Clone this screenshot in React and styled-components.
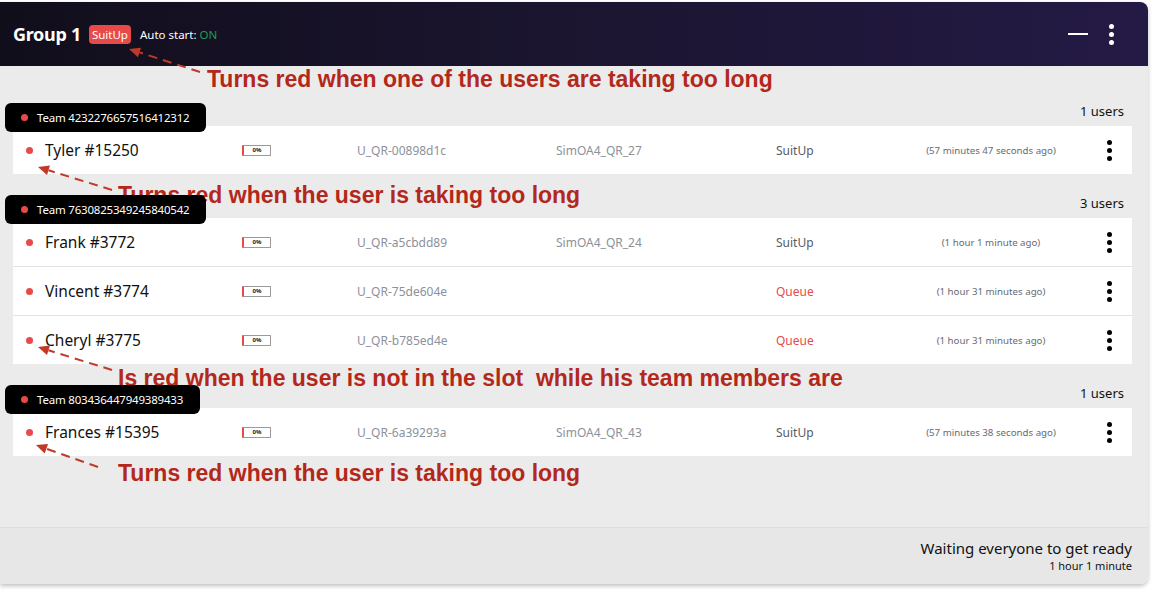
import styled, { createGlobalStyle } from "styled-components";

const GlobalStyle = createGlobalStyle`
  html, body {
    margin: 0;
    padding: 0;
    background: #ffffff;
  }
  body {
    font-family: "Noto Sans", "Open Sans", sans-serif;
  }
`;

const Page = styled.div`
  position: relative;
  width: 1161px;
  height: 593px;
  padding-top: 2px;
  box-sizing: border-box;
`;

const Panel = styled.div`
  width: 1148px;
  border-radius: 0 8px 8px 0;
  overflow: hidden;
  box-shadow: 0 2px 4px rgba(0, 0, 0, 0.25);
`;

const Header = styled.div`
  height: 64px;
  display: flex;
  align-items: center;
  padding: 0 34px 0 13px;
  background: linear-gradient(90deg, #110e1b 0%, #1b1530 50%, #241a45 100%);
  color: #fff;
`;

const Title = styled.div`
  font-size: 18px;
  font-weight: 700;
  letter-spacing: -0.3px;
`;

const StateBadge = styled.span`
  margin-left: 8px;
  background: #e84a4a;
  border-radius: 4px;
  padding: 2px 3px;
  font-size: 11.5px;
  line-height: 15px;
  color: #fff;
`;

const AutoStart = styled.span`
  margin-left: 9px;
  font-size: 11.5px;
  color: #fff;
  b {
    font-weight: 400;
    color: #1f9d50;
  }
`;

const HeaderActions = styled.div`
  margin-left: auto;
  display: flex;
  align-items: center;
  gap: 21px;
`;

const Minus = styled.div`
  width: 20px;
  height: 2px;
  background: #fff;
`;

const Kebab = styled.div`
  display: flex;
  flex-direction: column;
  align-items: center;
  gap: 3px;
  span {
    width: ${(p) => p.$size}px;
    height: ${(p) => p.$size}px;
    border-radius: 50%;
    background: ${(p) => p.$color};
  }
`;

const Body = styled.div`
  background: #ebebeb;
  padding: 37px 16px 71px 5px;
`;

const Section = styled.div`
  & + & {
    margin-top: 21px;
  }
`;

const TeamHeader = styled.div`
  display: flex;
  justify-content: space-between;
  align-items: flex-start;
  position: relative;
  z-index: 1;
`;

const TeamTag = styled.div`
  display: flex;
  align-items: center;
  gap: 9px;
  height: 29px;
  padding: 0 17px 0 16px;
  background: #000;
  border-radius: 6px;
  color: #fff;
  font-size: 11.5px;
  letter-spacing: -0.2px;
`;

const Dot = styled.span`
  width: 7px;
  height: 7px;
  border-radius: 50%;
  background: #e84a4a;
  flex: none;
`;

const UsersCount = styled.div`
  font-size: 13px;
  line-height: 16px;
  color: #111;
  padding-right: 8px;
`;

const Rows = styled.div`
  margin: -6px 0 0 8px;
  background: #fff;
`;

const Row = styled.div`
  display: grid;
  grid-template-columns: 19px 197px 115px 199px 220px 115px 200px 36px;
  align-items: center;
  height: 48px;
  padding-left: 13px;
  & + & {
    border-top: 1px solid #e3e3e3;
  }
`;

const Name = styled.div`
  font-size: 15.5px;
  color: #111;
`;

const Progress = styled.div`
  width: 26px;
  height: 9px;
  border: 1px solid #9a9a9a;
  border-left: 2px solid #e84a4a;
  border-radius: 1px;
  font-size: 6px;
  font-weight: 700;
  line-height: 9px;
  text-align: center;
  color: #222;
`;

const Cell = styled.div`
  font-size: 12px;
  color: ${(p) => p.$color || "#8c919a"};
`;

const TimeAgo = styled.div`
  font-size: 9.7px;
  color: #666b73;
  text-align: center;
`;

const Footer = styled.div`
  height: 57px;
  background: #e7e7e7;
  border-top: 1px solid #dedede;
  box-sizing: border-box;
  display: flex;
  flex-direction: column;
  align-items: flex-end;
  justify-content: center;
  padding-right: 16px;
  color: #111;
`;

const FooterTitle = styled.div`
  font-size: 15px;
  line-height: 20px;
`;

const FooterSub = styled.div`
  font-size: 11px;
  line-height: 16px;
`;

const Annotations = styled.svg`
  position: absolute;
  left: 0;
  top: 0;
  pointer-events: none;
`;

const Note = styled.div`
  position: absolute;
  left: ${(p) => p.$x}px;
  top: ${(p) => p.$y}px;
  font-family: "Liberation Sans", Arial, sans-serif;
  font-weight: 700;
  font-size: 23px;
  line-height: 26px;
  color: #b3281a;
  white-space: pre;
  pointer-events: none;
`;

const teams = [
  {
    id: "4232276657516412312",
    users: [
      { name: "Tyler #15250", qr: "U_QR-00898d1c", sim: "SimOA4_QR_27", status: "SuitUp", ago: "(57 minutes 47 seconds ago)" },
    ],
  },
  {
    id: "7630825349245840542",
    users: [
      { name: "Frank #3772", qr: "U_QR-a5cbdd89", sim: "SimOA4_QR_24", status: "SuitUp", ago: "(1 hour 1 minute ago)" },
      { name: "Vincent #3774", qr: "U_QR-75de604e", sim: "", status: "Queue", ago: "(1 hour 31 minutes ago)" },
      { name: "Cheryl #3775", qr: "U_QR-b785ed4e", sim: "", status: "Queue", ago: "(1 hour 31 minutes ago)" },
    ],
  },
  {
    id: "803436447949389433",
    users: [
      { name: "Frances #15395", qr: "U_QR-6a39293a", sim: "SimOA4_QR_43", status: "SuitUp", ago: "(57 minutes 38 seconds ago)" },
    ],
  },
];

// red notes drawn over the screenshot
const notes = [
  { x: 207, y: 66, text: "Turns red when one of the users are taking too long" },
  { x: 118, y: 182, text: "Turns red when the user is taking too long" },
  { x: 118, y: 365, text: "Is red when the user is not in the slot  while his team members are" },
  { x: 118, y: 460, text: "Turns red when the user is taking too long" },
];

const arrows = [
  [200, 72, 129, 49],
  [112, 190, 38, 167],
  [112, 370, 38, 347],
  [98, 467, 36, 445],
];

const Arrow = ({ x1, y1, x2, y2 }) => {
  const a = Math.atan2(y2 - y1, x2 - x1);
  const len = 11;
  const w = 5;
  const bx = x2 - len * Math.cos(a);
  const by = y2 - len * Math.sin(a);
  const px = -Math.sin(a) * w;
  const py = Math.cos(a) * w;
  return (
    <g>
      <line x1={x1} y1={y1} x2={bx} y2={by} stroke="#c0392b" strokeWidth="2" strokeDasharray="9 6" />
      <polygon points={`${x2},${y2} ${bx + px},${by + py} ${bx - px},${by - py}`} fill="#c0392b" />
    </g>
  );
};

const Dots = ({ size, color }) => (
  <Kebab $size={size} $color={color}>
    <span />
    <span />
    <span />
  </Kebab>
);

export default function App() {
  return (
    <Page>
      <GlobalStyle />
      <Panel>
        <Header>
          <Title>Group 1</Title>
          <StateBadge>SuitUp</StateBadge>
          <AutoStart>
            Auto start: <b>ON</b>
          </AutoStart>
          <HeaderActions>
            <Minus />
            <Dots size={5} color="#fff" />
          </HeaderActions>
        </Header>
        <Body>
          {teams.map((team) => (
            <Section key={team.id}>
              <TeamHeader>
                <TeamTag>
                  <Dot />
                  Team {team.id}
                </TeamTag>
                <UsersCount>{team.users.length} users</UsersCount>
              </TeamHeader>
              <Rows>
                {team.users.map((u) => (
                  <Row key={u.name}>
                    <Dot />
                    <Name>{u.name}</Name>
                    <Progress>0%</Progress>
                    <Cell>{u.qr}</Cell>
                    <Cell>{u.sim}</Cell>
                    <Cell $color={u.status === "Queue" ? "#e84a4a" : "#555a62"}>{u.status}</Cell>
                    <TimeAgo>{u.ago}</TimeAgo>
                    <Dots size={5} color="#000" />
                  </Row>
                ))}
              </Rows>
            </Section>
          ))}
        </Body>
        <Footer>
          <FooterTitle>Waiting everyone to get ready</FooterTitle>
          <FooterSub>1 hour 1 minute</FooterSub>
        </Footer>
      </Panel>
      <Annotations width="1161" height="593">
        {arrows.map(([x1, y1, x2, y2], i) => (
          <Arrow key={i} x1={x1} y1={y1} x2={x2} y2={y2} />
        ))}
      </Annotations>
      {notes.map((n) => (
        <Note key={n.y} $x={n.x} $y={n.y}>
          {n.text}
        </Note>
      ))}
    </Page>
  );
}
